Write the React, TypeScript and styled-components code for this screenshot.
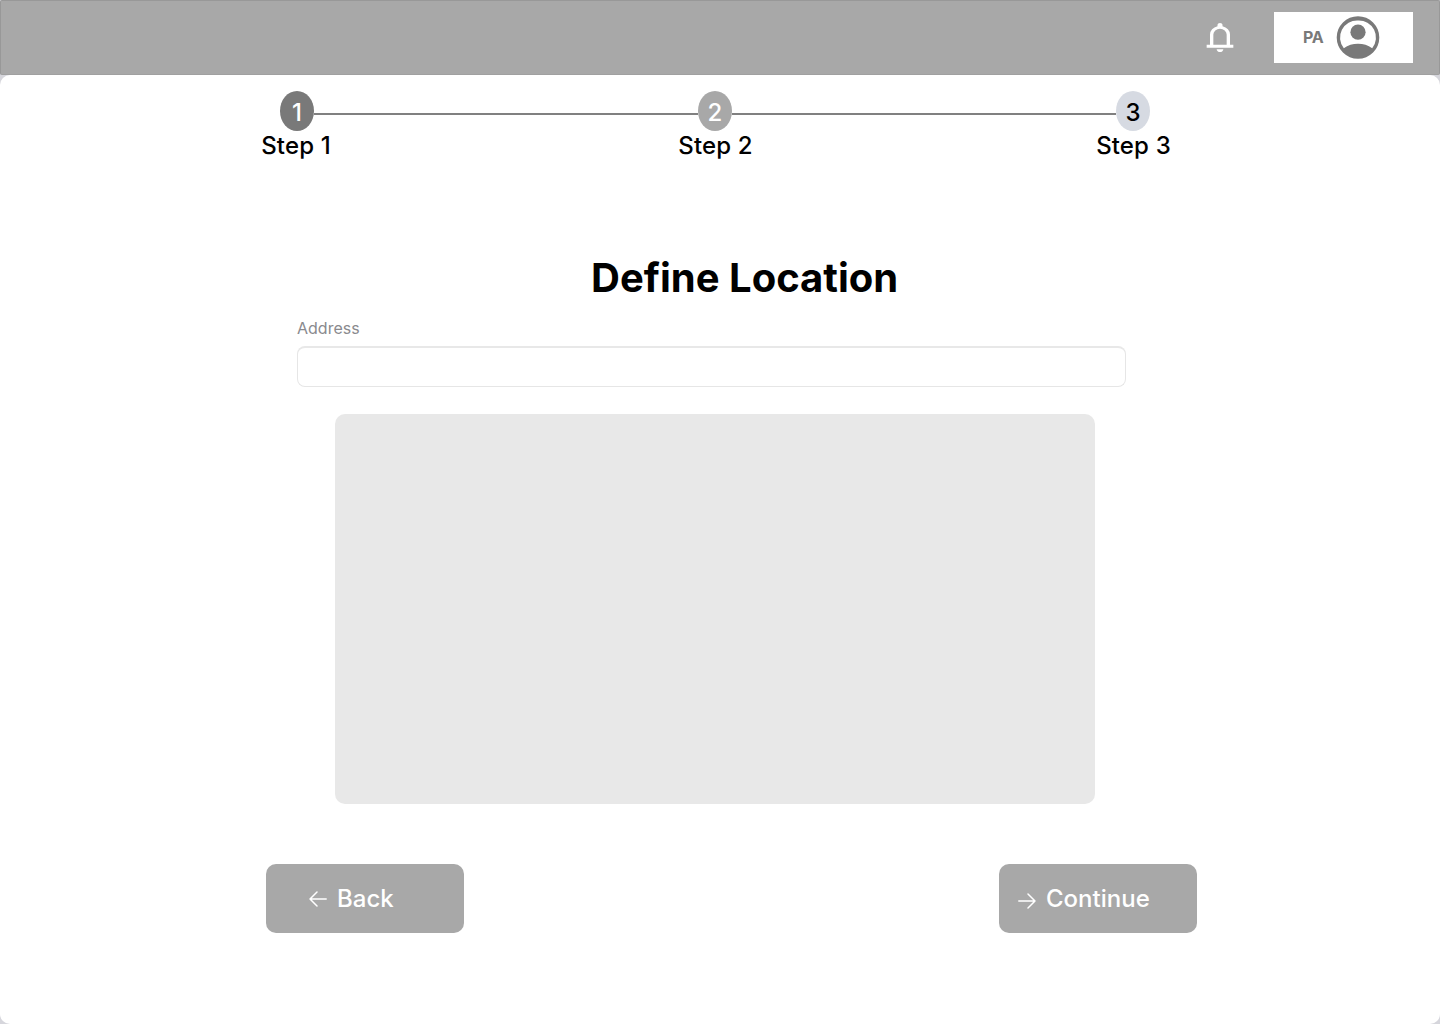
import React from "react";
import styled, { createGlobalStyle } from "styled-components";

const GlobalStyle = createGlobalStyle`
  *, *::before, *::after { box-sizing: border-box; }
  body { margin: 0; background: #a8a8a8; font-family: Inter, "Liberation Sans", sans-serif; }
`;

const Page = styled.div`
  width: 1440px;
  height: 1024px;
  display: flex;
  flex-direction: column;
  overflow: hidden;
  background: #d6d6dc;
`;

const Header = styled.header`
  height: 75px;
  flex: none;
  display: flex;
  justify-content: flex-end;
  align-items: flex-start;
  gap: 34px;
  padding: 11px 26px 0 0;
  background: #a8a8a8;
  border: 1px solid #989898;
  border-bottom-color: #a0a0a0;
  border-radius: 2px;
`;

const BellIcon = styled.svg`
  width: 40px;
  height: 35px;
  margin-top: 8px;
  fill: #fff;
`;

const Profile = styled.div`
  width: 139px;
  height: 51px;
  display: flex;
  align-items: center;
  gap: 11px;
  padding-left: 29px;
  background: #fff;
`;

const Initials = styled.span`
  width: 22px;
  margin-top: -1px;
  font: 700 16px/20px Inter, sans-serif;
  letter-spacing: -0.4px;
  color: #797979;
`;

const Avatar = styled.svg`
  width: 44px;
  height: 43px;
`;

const Panel = styled.main`
  flex: 1;
  display: flex;
  flex-direction: column;
  background: #fff;
  border-radius: 10px;
`;

const Stepper = styled.ol`
  list-style: none;
  display: flex;
  align-items: flex-start;
  margin: 16px 0 0 257px;
  padding: 0;
`;

const Step = styled.li`
  width: 80px;
  display: flex;
  flex-direction: column;
  align-items: center;
`;

const StepNumber = styled.span<{ $bg: string; $fg: string }>`
  width: 34px;
  height: 40px;
  padding-top: 4px;
  display: flex;
  align-items: center;
  justify-content: center;
  border-radius: 50%;
  background: ${(p) => p.$bg};
  color: ${(p) => p.$fg};
  font-size: 24px;
  font-weight: 500;
  line-height: 36px;
`;

const StepLabel = styled.span<{ $shift: number }>`
  margin-left: ${(p) => p.$shift}px;
  font-size: 24px;
  font-weight: 500;
  line-height: 29px;
  letter-spacing: 0.15px;
  white-space: nowrap;
  color: #000;
`;

const Connector = styled.li`
  width: 384px;
  height: 2px;
  margin: 22px -23px 0;
  background: #808080;
`;

const Title = styled.h1`
  width: 306px;
  margin: 94px 0 0 591px;
  font-size: 40px;
  font-weight: 700;
  line-height: 48px;
  white-space: nowrap;
  color: #000;
`;

const Field = styled.label`
  display: flex;
  flex-direction: column;
  gap: 8px;
  width: 829px;
  margin: 16px 0 0 297px;
  font-size: 16px;
  line-height: 20px;
  color: #8a8a8e;
`;

const AddressInput = styled.input`
  width: 100%;
  height: 41px;
  padding: 0 12px;
  border: 1px solid #e6e6e6;
  border-top: 2px solid #e8e8e8;
  border-radius: 8px;
  outline: none;
  background: #fff;
  font: inherit;
`;

const MapArea = styled.div`
  width: 760px;
  height: 390px;
  margin: 27px 0 0 335px;
  border-radius: 10px;
  background: #e8e8e8;
`;

const Actions = styled.div`
  display: flex;
  justify-content: space-between;
  width: 931px;
  margin: 60px 0 0 266px;
`;

const ActionButton = styled.button<{ $inset: number }>`
  width: 198px;
  height: 69px;
  display: flex;
  align-items: center;
  gap: 10px;
  padding: 0 0 0 ${(p) => p.$inset}px;
  border: 0;
  border-radius: 10px;
  background: #a8a8a8;
  color: #fff;
  font: 500 24px/30px Inter, sans-serif;
`;

const Arrow = styled.svg<{ $drop: number }>`
  width: 18px;
  height: 16px;
  flex: none;
  margin-top: ${(p) => p.$drop}px;
  fill: none;
  stroke: #fff;
  stroke-width: 1.5;
  stroke-linecap: round;
  stroke-linejoin: round;
`;

const steps = [
  { n: 1, bg: "#797979", fg: "#fff", shift: -2 },
  { n: 2, bg: "#a8a8a8", fg: "#fff", shift: 1 },
  { n: 3, bg: "#d6dae2", fg: "#000", shift: 1 },
];

export default function App() {
  return (
    <>
      <GlobalStyle />
      <Page>
        <Header>
          <BellIcon viewBox="0 -960 960 960" preserveAspectRatio="none">
            <path d="M160-200v-80h80v-280q0-83 50-147.500T420-792v-28q0-25 17.500-42.500T480-880q25 0 42.500 17.500T540-820v28q80 20 130 84.500T720-560v280h80v80H160ZM480-80q-33 0-56.500-23.500T400-160h160q0 33-23.500 56.500T480-80ZM320-280h320v-280q0-66-47-113t-113-47q-66 0-113 47t-47 113v280Z" />
          </BellIcon>
          <Profile>
            <Initials>PA</Initials>
            <Avatar viewBox="0 0 44 43">
              <path
                fill="#797979"
                fillRule="evenodd"
                d="M22 0.200a21.300 21.300 0 1 1 0 42.600a21.300 21.300 0 0 1 0-42.600ZM22 4.400A17.100 17.100 0 0 0 7.800 32.200C12 29.200 16.700 27.800 22 27.800S32 29.200 36.200 32.200A17.100 17.100 0 0 0 22 4.400Z"
              />
              <circle cx="22" cy="16.200" r="7.600" fill="#797979" />
            </Avatar>
          </Profile>
        </Header>
        <Panel>
          <Stepper>
            {steps.map((s, i) => (
              <React.Fragment key={s.n}>
                {i > 0 && <Connector aria-hidden />}
                <Step>
                  <StepNumber $bg={s.bg} $fg={s.fg}>{s.n}</StepNumber>
                  <StepLabel $shift={s.shift}>Step {s.n}</StepLabel>
                </Step>
              </React.Fragment>
            ))}
          </Stepper>
          <Title>Define Location</Title>
          <Field>
            Address
            <AddressInput type="text" />
          </Field>
          <MapArea />
          <Actions>
            <ActionButton $inset={43}>
              <Arrow $drop={1} viewBox="0 0 18 16">
                <path d="M17.200 8H1M8 1L1 8l7 7" />
              </Arrow>
              Back
            </ActionButton>
            <ActionButton $inset={19}>
              <Arrow $drop={5} viewBox="0 0 18 16">
                <path d="M.8 8H17M10 1l7 7-7 7" />
              </Arrow>
              Continue
            </ActionButton>
          </Actions>
        </Panel>
      </Page>
    </>
  );
}
